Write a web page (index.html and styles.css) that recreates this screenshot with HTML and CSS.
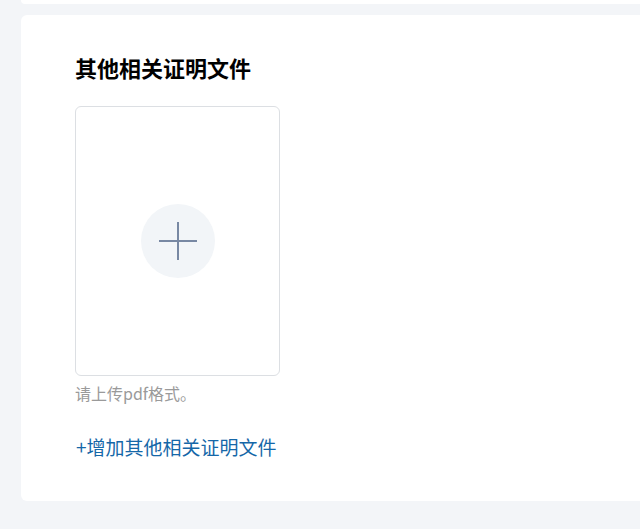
FILE: index.html
```html
<!DOCTYPE html>
<html lang="zh">
<head>
<meta charset="utf-8">
<link rel="stylesheet" href="styles.css">
</head>
<body>
<div class="page">
  <div class="card-prev"></div>
  <section class="card">
    <h2 class="title">其他相关证明文件</h2>
    <div class="upload">
      <div class="upload-circle">
        <svg width="38" height="38" viewBox="0 0 38 38" aria-hidden="true">
          <path d="M0 19H38M19 0V38" stroke="#7888a3" stroke-width="2" fill="none"/>
        </svg>
      </div>
    </div>
    <p class="hint">请上传pdf格式。</p>
    <a class="add-link" href="#">+增加其他相关证明文件</a>
  </section>
</div>
</body>
</html>
```
FILE: styles.css
```css
html, body {
  margin: 0;
  padding: 0;
  background: #f3f5f8;
  font-family: "Noto Sans CJK SC", "Noto Sans", sans-serif;
}
.page {
  padding-left: 21px;
  height: 529px;
  overflow: hidden;
}
.card-prev {
  height: 4px;
  background: #fff;
  border-radius: 0 0 0 6px;
}
.card {
  margin-top: 11px;
  background: #fff;
  border-radius: 6px 0 0 6px;
  padding: 37px 0 40px 54px;
  display: flex;
  flex-direction: column;
  align-items: flex-start;
}
.title {
  margin: 0;
  font-size: 22px;
  line-height: 30px;
  font-weight: 700;
  color: #000;
}
.upload {
  margin-top: 24px;
  width: 205px;
  height: 270px;
  box-sizing: border-box;
  border: 1px solid #dcdfe3;
  border-radius: 6px;
  display: flex;
  align-items: center;
  justify-content: center;
}
.upload-circle {
  width: 74px;
  height: 74px;
  border-radius: 50%;
  background: #f2f5f8;
  display: flex;
  align-items: center;
  justify-content: center;
}
.hint {
  margin: 5px 0 0;
  font-size: 16px;
  line-height: 24px;
  color: #9a9a9a;
}
.add-link {
  margin-top: 28px;
  font-size: 19px;
  line-height: 28px;
  color: #1567a8;
  text-decoration: none;
  padding-left: 1px;
}
```
